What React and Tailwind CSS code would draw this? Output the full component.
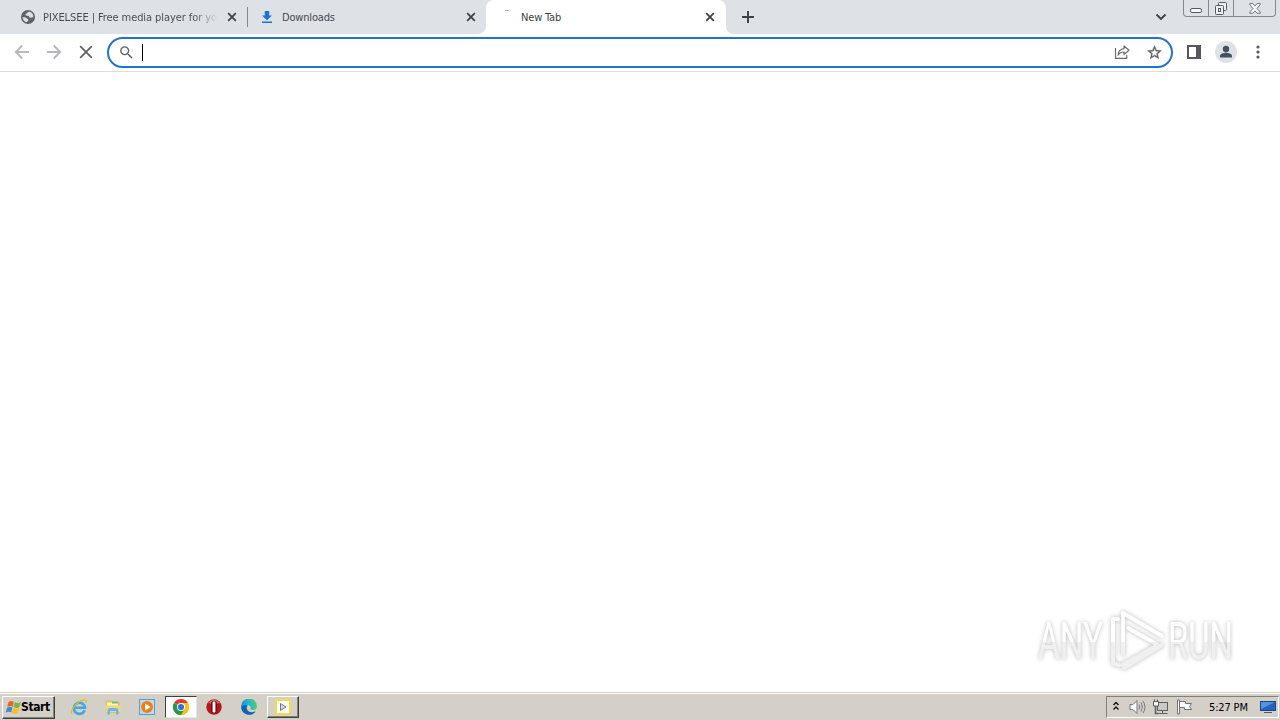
import React from "react";
import clsx from "clsx";

const UI_FONT = "font-['DejaVu_Sans_Condensed','DejaVu_Sans',sans-serif]";

function CloseIcon({ className }) {
  return (
    <svg viewBox="0 0 10 10" className={className}>
      <path d="M1.2 1.2l7.6 7.6M8.8 1.2L1.2 8.8" stroke="#3f4349" strokeWidth="1.8" />
    </svg>
  );
}

function GlobeIcon() {
  return (
    <svg viewBox="0 0 16 16" className="w-4 h-4 shrink-0">
      <circle cx="8" cy="8" r="7" fill="#5f6368" />
      <path d="M9 2.600C7.500 3 7.800 4.300 6.500 4.500S5 6 6.300 6.600 9 6.600 9.300 8s2.200.5 3.900.3A5.400 5.400 0 0 0 9 2.600z" fill="#dee1e6" />
      <path d="M2.600 8.200c1.700-.2 3.400 0 4 1s1.800.6 1.800 1.700-1.300 1-1.400 2.300A5.400 5.400 0 0 1 2.600 8.200z" fill="#dee1e6" />
    </svg>
  );
}

function DownloadIcon() {
  return (
    <svg viewBox="0 0 16 16" className="w-4 h-4 shrink-0" fill="#1a73d9">
      <path d="M5.800 2h4.400v4.500H13L8 11.200 3 6.500h2.800zM3 12.600h10v1.500H3z" />
    </svg>
  );
}

function Tab({ icon, title, active, className }) {
  return (
    <div className={clsx("flex items-center h-[34px] shrink-0", className)}>
      {icon}
      <div
        className={clsx(
          "ml-[7px] mt-px w-[176px] overflow-hidden whitespace-nowrap text-[11px] leading-[17px] tracking-[-0.18px]",
          active ? "text-[#3c4043]" : "text-[#45494f]"
        )}
      >
        {title}
      </div>
      <CloseIcon className="ml-2 w-[10px] h-[10px] shrink-0" />
    </div>
  );
}

function TabStrip() {
  return (
    <div className="relative flex h-[34px] bg-[#dee1e6]">
      <Tab
        className="w-[247px] pl-5"
        icon={<GlobeIcon />}
        title={
          <div className="w-[175px] tracking-[-0.08px] bg-linear-to-r from-[#45494f] from-86% to-transparent bg-clip-text text-transparent">
            PIXELSEE | Free media player for yo
          </div>
        }
      />
      <div className="w-px h-5 mt-[7px] bg-[#85888d]" />
      <Tab className="w-[238px] pl-[11px]" icon={<DownloadIcon />} title="Downloads" />
      <div className="relative w-[240px] h-[34px] bg-white rounded-t-lg">
        <svg viewBox="0 0 8 8" className="absolute -left-2 bottom-0 w-2 h-2">
          <path d="M8 0v8H0a8 8 0 0 0 8-8z" fill="#fff" />
        </svg>
        <svg viewBox="0 0 8 8" className="absolute -right-2 bottom-0 w-2 h-2">
          <path d="M0 0v8h8a8 8 0 0 1-8-8z" fill="#fff" />
        </svg>
        <Tab
          active
          className="pl-3"
          icon={
            <svg viewBox="0 0 16 16" className="w-4 h-4 shrink-0">
              <path d="M7 1.700q1.500-.800 3.500-.200" stroke="#a6a6a6" fill="none" />
            </svg>
          }
          title="New Tab"
        />
      </div>
      <svg viewBox="0 0 12 12" className="ml-4 mt-[11px] w-3 h-3">
        <path d="M6 0v12M0 6h12" stroke="#3c4043" strokeWidth="1.900" />
      </svg>
      <svg viewBox="0 0 12 8" className="ml-auto mr-4 mt-[13px] w-3 h-2">
        <path d="M1.500 1.500L6 6l4.500-4.500" fill="none" stroke="#3c4043" strokeWidth="1.800" />
      </svg>
      <WindowButtons />
    </div>
  );
}

function WindowButtons() {
  return (
    <div className="flex w-[93px] h-[17px] mr-1 border border-t-0 border-[#85898f] rounded-b-[4px] divide-x divide-[#85898f]">
      <div className="w-[25px] flex justify-center pt-[8px]">
        <div className="w-3 h-[5px] border border-[#55585d] rounded-[2px] bg-[#f5f6f8]" />
      </div>
      <div className="w-[25px] flex justify-center pt-[2px]">
        <svg viewBox="0 0 14 13" className="w-[14px] h-[13px]" fill="#eef0f3" stroke="#55585d">
          <rect x="4.500" y=".5" width="8" height="8" rx="1" />
          <rect x="1.500" y="3.500" width="8" height="9" rx="1" />
          <rect x="4.500" y="6.500" width="2" height="3" />
        </svg>
      </div>
      <div className="flex-1 flex justify-center pt-[3px]">
        <svg viewBox="0 0 12 11" className="w-3 h-[11px]">
          <path
            d="M.8.500h3L6 3 8.200.500h3v1.200L8 5.500l3.200 3.500v1.300h-3L6 8l-2.200 2.300h-3V9L4 5.500.8 1.700z"
            fill="#f5f6f8"
            stroke="#63666b"
            strokeWidth=".9"
          />
        </svg>
      </div>
    </div>
  );
}

function Toolbar() {
  return (
    <div className="flex items-start h-[38px] pt-[3px] border-b border-[#dcdcdf] bg-white">
      <svg viewBox="0 0 16 16" className="ml-[14px] mt-[7px] w-4 h-4" fill="none" stroke="#b7b8ba" strokeWidth="1.900">
        <path d="M15 8H2M8.200 1.500L1.800 8l6.400 6.500" />
      </svg>
      <svg viewBox="0 0 16 16" className="ml-4 mt-[7px] w-4 h-4" fill="none" stroke="#b7b8ba" strokeWidth="1.900">
        <path d="M1 8h13M7.800 1.500L14.200 8l-6.400 6.500" />
      </svg>
      <svg viewBox="0 0 14 14" className="ml-[17px] mt-2 w-[14px] h-[14px]" stroke="#5f6368" strokeWidth="1.800">
        <path d="M1.200 1.200l11.600 11.600M12.800 1.200L1.200 12.800" />
      </svg>

      <div className="ml-[14px] w-[1066px] h-[31px] flex items-start border-2 border-[#2272d2] rounded-full pt-[5px] pl-[9px] pr-[8px]">
        <svg viewBox="0 0 24 24" className="w-[17px] h-[17px]" fill="#5f6368">
          <path d="M15.500 14h-.79l-.28-.27A6.470 6.470 0 0 0 16 9.500 6.500 6.500 0 1 0 9.500 16c1.610 0 3.090-.59 4.230-1.570l.27.28v.79l5 4.990L20.490 19l-4.990-5zm-6 0C7.010 14 5 11.990 5 9.500S7.010 5 9.500 5 14 7.010 14 9.500 11.990 14 9.500 14z" />
        </svg>
        <div className="ml-[7px] w-px h-[17px] bg-black" />
        <svg
          viewBox="0 0 16 16"
          className="ml-auto w-4 h-4"
          fill="none"
          stroke="#676b70"
          strokeWidth="1.200"
        >
          <path d="M1.500 4v10.400h11.200V11" />
          <path d="M10 2l5 4.300-5 4.200V8C7.300 8 5.300 9 4 11.200 4.300 7.500 6.500 5 10 4.600z" strokeLinejoin="round" />
        </svg>
        <svg viewBox="0 0 24 24" className="ml-4 w-[17px] h-[17px]" fill="#5f6368" stroke="#5f6368" strokeWidth=".4">
          <path d="M22 9.240l-7.190-.62L12 2 9.190 8.630 2 9.240l5.460 4.730L5.820 21 12 17.270 18.180 21l-1.630-7.030L22 9.240zM12 15.400l-3.760 2.270 1-4.280-3.320-2.880 4.380-.38L12 6.100l1.710 4.040 4.380.38-3.320 2.880 1 4.280L12 15.400z" />
        </svg>
      </div>

      <svg viewBox="0 0 14 14" className="ml-[14px] mt-2 w-[14px] h-[14px]">
        <rect x="1" y="1" width="12" height="12" fill="none" stroke="#56565b" strokeWidth="2" />
        <path d="M9 1h4v12H9z" fill="#56565b" />
      </svg>
      <svg viewBox="0 0 22 22" className="ml-[14px] mt-1 w-[22px] h-[22px]">
        <circle cx="11" cy="11" r="11" fill="#dee1e6" />
        <circle cx="11" cy="8" r="3.200" fill="#474f63" />
        <path d="M5 16.500V15c0-2 3.500-3.200 6-3.200s6 1.200 6 3.200v1.500z" fill="#474f63" />
      </svg>
      <svg viewBox="0 0 4 14" className="ml-[19px] mt-2 w-1 h-[14px]" fill="#56595e">
        <circle cx="2" cy="2" r="1.600" />
        <circle cx="2" cy="7" r="1.600" />
        <circle cx="2" cy="12" r="1.600" />
      </svg>
    </div>
  );
}

function Watermark() {
  return (
    <svg
      viewBox="0 0 210 76"
      className="absolute left-[1030px] top-[602px] w-[210px] h-[76px] overflow-visible drop-shadow-[0_0_2px_rgba(0,0,0,0.28)]"
    >
      <defs>
        <linearGradient id="mark" x1="0" y1="0" x2="0" y2="76" gradientUnits="userSpaceOnUse">
          <stop offset=".53" stopColor="#fff" />
          <stop offset=".53" stopColor="#f0f0f0" />
        </linearGradient>
      </defs>
      <g fill="url(#mark)" fontFamily="Roboto, sans-serif" fontSize="51">
        <text x="8" y="57" textLength="65" lengthAdjust="spacingAndGlyphs">
          ANY
        </text>
        <text x="138" y="57" textLength="65" lengthAdjust="spacingAndGlyphs">
          RUN
        </text>
      </g>
      <g fill="none" stroke="url(#mark)" strokeWidth="4" strokeLinejoin="round" strokeLinecap="round">
        <path d="M88 17h-5v44l6 2" />
        <path d="M93 52V11l39 23" />
        <path d="M98 26l30 17-36 20" />
        <path d="M132 43L94 66" />
      </g>
    </svg>
  );
}

function StartButton() {
  return (
    <div className="flex items-center w-[53px] h-[23px] pl-[2px] bg-[#d4d0c8] border border-t-white border-l-white border-r-[#404040] border-b-[#404040] shadow-[inset_-1px_-1px_0_#808080]">
      <svg viewBox="-1 0 16 15" className="w-4 h-4 shrink-0">
        <path d="M2.500 2.500C4.500 1 6 1.300 7.800 2.300L6.600 7.200C4.800 6.200 3.200 6.200 1.200 7.400z" fill="#e8632a" />
        <path d="M8.600 2.700c2 1 3.800 1 6.200-.2l-1.300 5c-2.200 1.200-4 1.200-6.100.1z" fill="#7db542" />
        <path d="M1 8.300c2-1.200 3.600-1.200 5.400-.2l-1.200 4.800C3.400 12 1.800 12-.3 13.200z" fill="#3c8bd0" />
        <path d="M7.200 8.500c2 1.100 3.900 1.100 6 0L12 13.400c-2.100 1.200-4 1-6 0z" fill="#f6bd29" />
      </svg>
      <span className="text-[12px] font-bold tracking-[-0.4px] leading-[14px] text-black">Start</span>
    </div>
  );
}

function IeIcon() {
  return (
    <svg viewBox="0 0 18 18" className="w-[18px] h-[18px]">
      <path
        d="M14.700 12.200A5.600 5.600 0 1 1 15 9.700H5"
        fill="none"
        stroke="#43a8df"
        strokeWidth="2.600"
      />
      <path d="M1.800 16C-.5 12 9.500.500 15.500 2c1.300.5 1 1.800.2 3" fill="none" stroke="#e4b72e" strokeWidth="1.200" />
    </svg>
  );
}

function FolderIcon() {
  return (
    <svg viewBox="0 0 18 18" className="w-[18px] h-[18px]">
      <path d="M1.500 2.500h6L9 4h7v11H2z" fill="#dfc268" />
      <path d="M3 4.500h11V9H3z" fill="#fff4b8" />
      <path d="M8 3.500h6v2H8z" fill="#6fb783" />
      <path d="M1 7.500h16L16 14H2z" fill="#f0d682" />
      <path d="M3.500 16.500V13q0-3 3-3h5q3 0 3 3v3.500H12V13H6v3.500z" fill="#65b9e3" />
    </svg>
  );
}

function MediaIcon() {
  return (
    <svg viewBox="0 0 16 16" className="w-4 h-4">
      <rect x=".5" y=".5" width="15" height="15" fill="#b9dcf2" stroke="#55a0d0" />
      <circle cx="8" cy="8" r="6" fill="#f08016" />
      <path d="M6.200 4.500L11.500 8l-5.300 3.500z" fill="#fff" />
    </svg>
  );
}

function ChromeIcon() {
  return (
    <svg viewBox="0 0 16 16" className="w-4 h-4">
      <path d="M8 8L1.070 4A8 8 0 0 1 14.930 4z" fill="#e33b2e" />
      <path d="M8 8l6.930-4A8 8 0 0 1 8 16z" fill="#fbc116" />
      <path d="M8 8v8A8 8 0 0 1 1.070 4z" fill="#279847" />
      <path d="M8 4h6.930A8 8 0 0 1 8 16l3.460-6z" fill="#fbc116" />
      <path d="M11.460 10L8 16A8 8 0 0 1 1.070 4l3.470 6z" fill="#279847" />
      <circle cx="8" cy="8" r="4" fill="#fff" />
      <circle cx="8" cy="8" r="3.100" fill="#2f73dc" />
    </svg>
  );
}

function OperaIcon() {
  return (
    <svg viewBox="0 0 16 16" className="w-4 h-4">
      <circle cx="8" cy="8" r="7.700" fill="#b3161c" />
      <path d="M2 4a7.200 7.200 0 0 1 12 0Q8 6 2 4z" fill="#d76561" />
      <rect x="5" y="2" width="6" height="12" rx="2.500" fill="#7d0a10" />
      <rect x="6.600" y="2.500" width="2.800" height="11" rx="1.200" fill="#fff" />
    </svg>
  );
}

function EdgeIcon() {
  return (
    <svg viewBox="0 0 16 16" className="w-4 h-4">
      <defs>
        <linearGradient id="edge" x1="0" y1=".4" x2="1" y2=".3">
          <stop offset="0" stopColor="#1b8fd8" />
          <stop offset=".5" stopColor="#27b9c8" />
          <stop offset="1" stopColor="#57cf59" />
        </linearGradient>
      </defs>
      <path d="M0 8a8 8 0 0 1 16-1c0 3-2 4-4.200 4-2 0-3-.8-2.300-1.800C10.300 7 8 5.500 5.500 6 2.500 6.500 1 9 2 12A8 8 0 0 1 0 8z" fill="url(#edge)" />
      <path d="M.3 9.500C.5 6.500 4 5 7 6.500 4.500 8 6 13.500 11 13.200c1.700-.1 2.900-.9 3.600-.7A8 8 0 0 1 .3 9.500z" fill="#1563b0" />
    </svg>
  );
}

function PixelseeIcon() {
  return (
    <svg viewBox="0 0 16 16" className="w-4 h-4">
      <rect x="1" y="1" width="14" height="14" fill="#fff" stroke="#f1dc4c" strokeWidth="2" />
      <path d="M5.500 4.500L11 8l-5.500 3.500z" fill="#d6d6dc" stroke="#77777f" />
    </svg>
  );
}

function Tray() {
  return (
    <div className="ml-auto mr-[1px] w-[173px] h-[22px] flex items-center border border-t-[#808080] border-l-[#808080] border-r-white border-b-white">
      <svg viewBox="0 0 8 10" className="ml-[5px] mb-[2px] w-2 h-[10px]" fill="none" stroke="#111" strokeWidth="1.400">
        <path d="M1.500 4L4 1.500 6.500 4M1.500 8.500L4 6l2.500 2.500" />
      </svg>
      <svg viewBox="0 0 17 16" className="ml-[9px] w-[17px] h-4" fill="none" stroke="#77777a">
        <path d="M1 5.500h3l4-4v13l-4-4H1z" fill="#fafafa" />
        <path d="M10 5.500q1.500 2.500 0 5M12 3.500q3 4.500 0 9M14 2q4 6 0 12" />
      </svg>
      <svg viewBox="0 0 17 16" className="ml-[6px] w-[17px] h-4" stroke="#5e5e60">
        <rect x="5.500" y="3.500" width="10" height="8" fill="#c9c9c9" />
        <path d="M6.500 14.500h9M10.500 12v2" fill="none" />
        <path d="M3.500 7v7.500h3" fill="none" strokeWidth="1.500" />
        <path d="M1.500 2.500h5v4.500h-5zM2.500.5v2M5.500.5v2" fill="#f7f7f7" />
      </svg>
      <svg viewBox="0 0 17 16" className="ml-[7px] w-[17px] h-4" stroke="#727275" fill="#f9f9f9">
        <path d="M1.500 1v14h2V1z" />
        <path d="M3.500 2.500h6v2h6l-2 3 2 3h-7v-2h-5z" />
      </svg>
      <span className="ml-[16px] mt-px w-[48px] whitespace-nowrap text-[11px] leading-[15px] tracking-[-0.15px] text-black">
        5:27 PM
      </span>
      <svg viewBox="0 0 16 14" className="ml-auto mr-[2px] w-4 h-[14px]">
        <rect x=".5" y="1.500" width="15" height="9" fill="#2463bc" stroke="#174586" />
        <path d="M1 2h14L1 9z" fill="#5793dc" />
        <path d="M4 12.500h8" stroke="#465879" />
      </svg>
    </div>
  );
}

function Taskbar() {
  return (
    <div className="h-[28px] pt-px border-t border-[#d0cdc7] bg-white">
      <div className="flex items-center h-[26px] pl-[2px] bg-[#d4d0c8]">
        <StartButton />
        <div className="ml-[15px]"><IeIcon /></div>
        <div className="ml-4"><FolderIcon /></div>
        <div className="ml-[17px]"><MediaIcon /></div>
        <div className="ml-[10px] w-8 h-[22px] flex items-center justify-center bg-white border border-t-[#404040] border-l-[#404040] border-r-[#e8e6e0] border-b-[#e8e6e0]">
          <ChromeIcon />
        </div>
        <div className="ml-[9px]"><OperaIcon /></div>
        <div className="ml-[19px]"><EdgeIcon /></div>
        <div className="ml-[10px] w-8 h-[22px] flex items-center justify-center border border-t-white border-l-white border-r-[#404040] border-b-[#404040] shadow-[inset_-1px_-1px_0_#808080]">
          <PixelseeIcon />
        </div>
        <Tray />
      </div>
    </div>
  );
}

export default function App() {
  return (
    <div className={clsx("relative flex flex-col w-[1280px] h-[720px] overflow-hidden bg-white", UI_FONT)}>
      <TabStrip />
      <Toolbar />
      <div className="flex-1" />
      <Watermark />
      <Taskbar />
    </div>
  );
}
